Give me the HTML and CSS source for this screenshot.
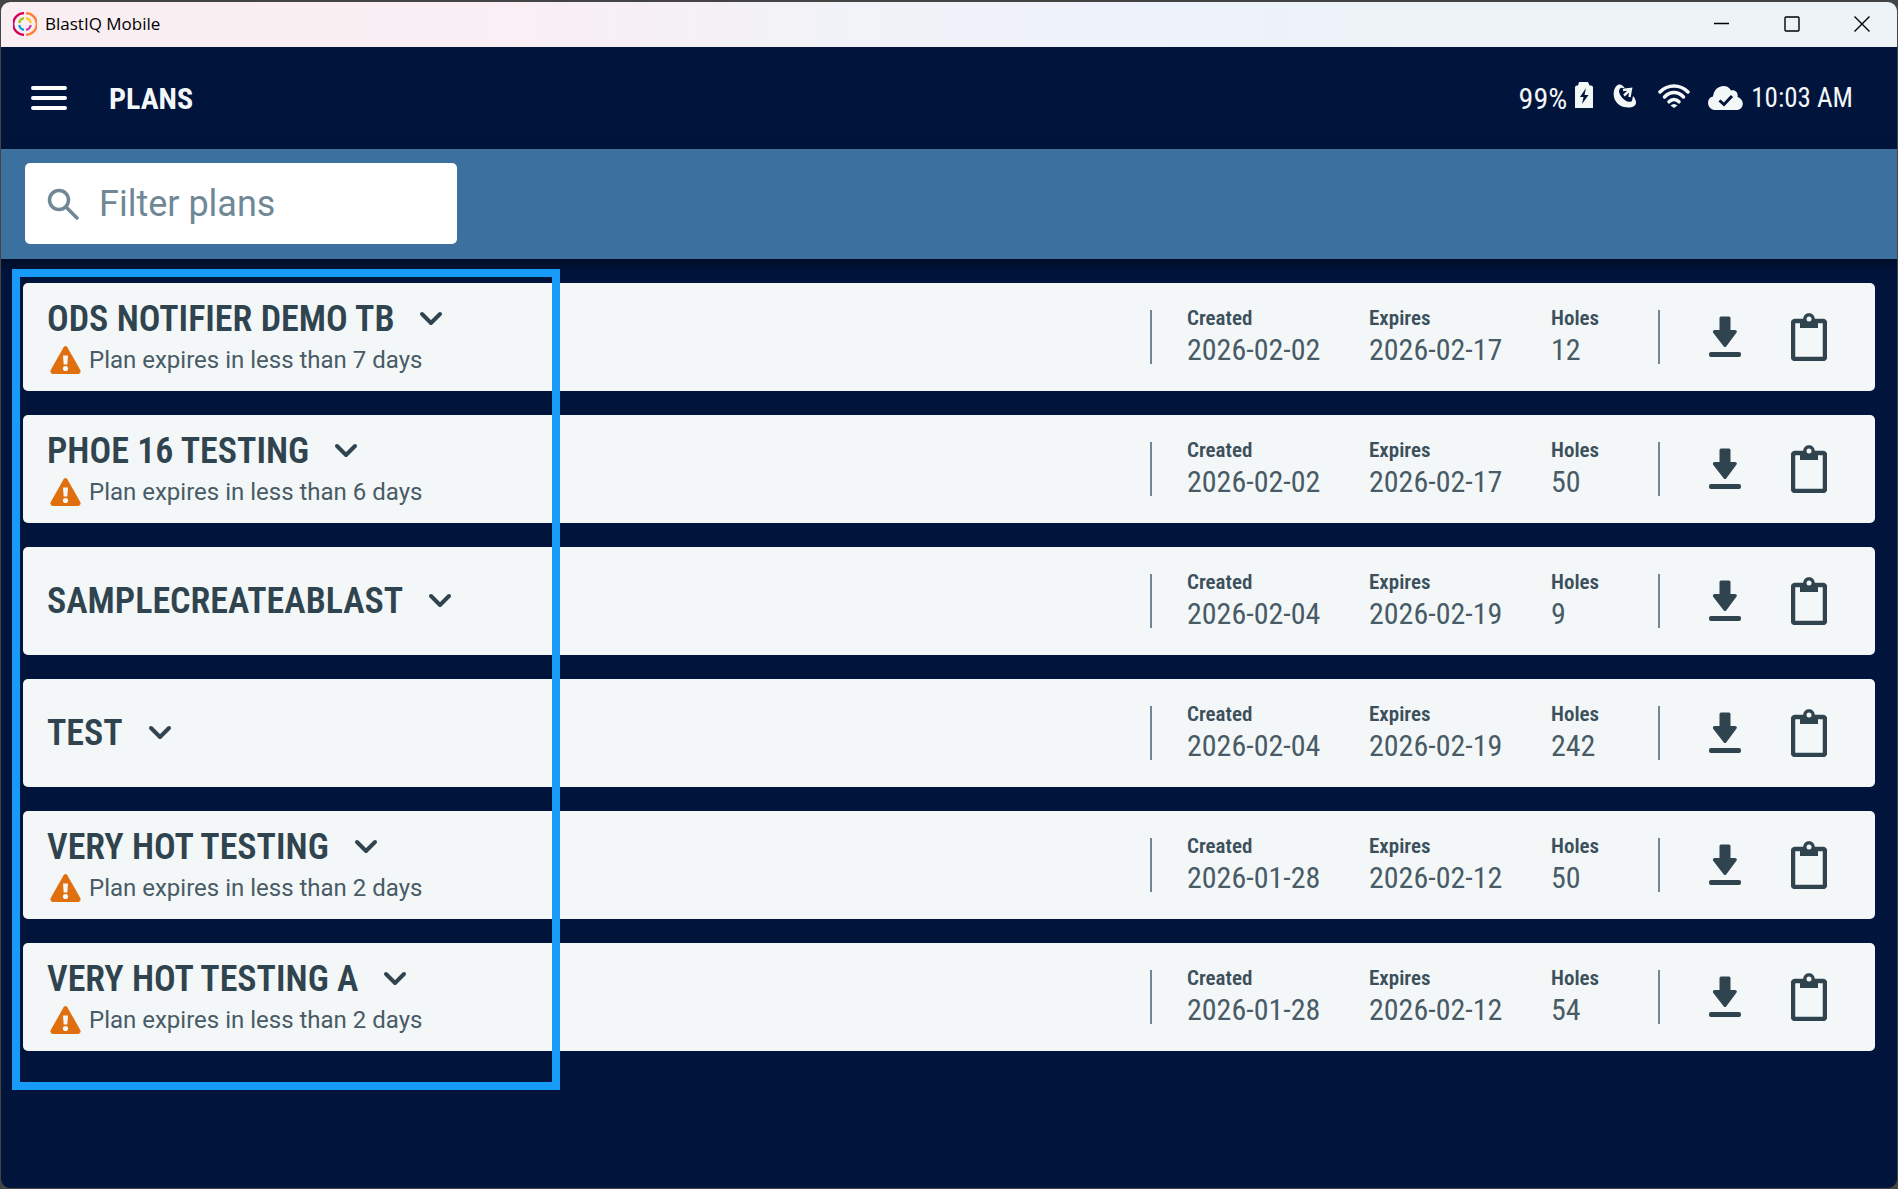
FILE: index.html
```html
<!DOCTYPE html>
<html lang="en">
<head>
    <meta charset="utf-8">
    <title>BlastIQ Mobile</title>
    <meta name="viewport" content="width=device-width, initial-scale=1">
    <link rel="stylesheet" href="styles.css">
</head>
<body>

<!-- Icon definitions -->
<svg class="icon-defs" aria-hidden="true">
    <symbol id="icon-chevron" viewBox="0 0 24 16">
        <path d="M3 3l9 9 9-9" fill="none" stroke="currentColor" stroke-width="4" stroke-linecap="round" stroke-linejoin="round"/>
    </symbol>
    <symbol id="icon-warning" viewBox="0 0 31 28">
        <path d="M13.6 1.2Q15.5-1 17.4 1.2L30.4 24.3Q31.2 27.5 28.5 28H2.5Q-.2 27.5.6 24.3Z" fill="#e0700d"/>
        <path d="M13 9.5h5l-.7 9h-3.6z" fill="#f3f7f8"/>
        <circle cx="15.5" cy="22.5" r="2.6" fill="#f3f7f8"/>
    </symbol>
    <symbol id="icon-download" viewBox="0 0 32 42">
        <path d="M10.5 2q0-1.5 1.5-1.5h8q1.5 0 1.5 1.5v12h4.5q3 .5 1.2 3L17.2 30.5q-1.2 1.2-2.4 0L4.3 17q-1.3-2.5 1.2-3h5z" fill="currentColor"/>
        <rect x="0" y="36" width="32" height="5" rx="2" fill="currentColor"/>
    </symbol>
    <symbol id="icon-clipboard" viewBox="0 0 36 48">
        <rect x="2" y="8" width="32" height="38" rx="2" fill="none" stroke="currentColor" stroke-width="4.5"/>
        <path d="M9 6h3.2C12.5-1.8 23.5-1.8 23.8 6H27v9H9z" fill="currentColor"/>
        <circle cx="18" cy="6" r="2.5" fill="#f3f7f8"/>
    </symbol>
</svg>

<div class="window">
    <!-- Title bar -->
    <div class="titlebar">
        <svg class="app-logo" viewBox="0 0 24 24" aria-hidden="true">
            <g fill="none" stroke-width="2.2">
                <path d="M11 1.2a10.8 10.8 0 0 0 0 21.6" stroke="#d6005b"/>
                <path d="M13 1.2a10.8 10.8 0 0 1 0 21.6" stroke="#ff7f32"/>
                <path d="M6.2 11A6 6 0 0 1 11 6.2" stroke="#a9c015"/>
                <path d="M13 6.2A6 6 0 0 1 17.8 11" stroke="#ffc61e"/>
                <path d="M6.2 13A6 6 0 0 0 11 17.8" stroke="#009fda"/>
                <path d="M13 17.8A6 6 0 0 0 17.8 13" stroke="#c238a8"/>
            </g>
        </svg>
        <span class="app-name">BlastIQ Mobile</span>
        <div class="window-controls">
            <button type="button" aria-label="Minimize">
                <svg viewBox="0 0 16 16"><path d="M0 7.5h15"/></svg>
            </button>
            <button type="button" aria-label="Maximize">
                <svg viewBox="0 0 16 16"><rect x="1" y="1" width="14" height="14" rx="1"/></svg>
            </button>
            <button type="button" aria-label="Close">
                <svg viewBox="0 0 16 16"><path d="M.5.5l15 15M15.5.5l-15 15"/></svg>
            </button>
        </div>
    </div>

    <!-- App header -->
    <header class="header">
        <button type="button" class="menu-button" aria-label="Menu">
            <svg viewBox="0 0 36 26"><path d="M2 3h32M2 13h32M2 23h32"/></svg>
        </button>
        <h1>PLANS</h1>
        <div class="status">
            <span>99%</span>
            <svg class="battery" viewBox="0 0 18 26" aria-hidden="true">
                <path d="M4 0h9l1.5 3.5H16q2 0 2 2V26H0V5.5q0-2 2-2h1z" fill="#f3f7f8"/>
                <path d="M11 6L5 15h3.5L7 22l6.5-9H9.5z" fill="#00143c"/>
            </svg>
            <svg class="satellite" viewBox="0 0 24 24" aria-hidden="true">
                <path d="M5 .8C-2 5-1 20 11 23c5 1.2 12 .5 12-4.5 0-2.5-1.5-5-3-6.5l-1 5c-2 1.5-5 1-8-1.5C7 12 4.5 7 7 4.5c1-1 3-.8 5 0C10.5 1.5 7.5-.5 5 .8z" fill="#f3f7f8"/>
                <path d="M10 6l8-1-1.5 8M17.5 5.5L11 11.5" fill="none" stroke="#f3f7f8" stroke-width="2.4"/>
            </svg>
            <svg class="wifi" viewBox="0 0 32 24" aria-hidden="true">
                <g fill="none" stroke="#f3f7f8" stroke-width="3.5" stroke-linecap="round">
                    <path d="M2 8C10 0 22 0 30 8"/>
                    <path d="M6.5 13c5.5-6 13.500-6 19 0"/>
                    <path d="M11 17.8c3-3.2 7-3.2 10 0"/>
                </g>
                <path d="M12.5 21.5q3.5-3 7 0L16 24z" fill="#f3f7f8"/>
            </svg>
            <svg class="cloud" viewBox="0 0 35 24" aria-hidden="true">
                <path d="M8 24C-1.5 24-2.5 12 5 10.5 6.5-1 19-3 23 4.5c4-1.5 7.5 2 6.5 6.5C37 13 36.5 24 28 24z" fill="#f3f7f8"/>
                <path d="M11.5 14.5l4.5 4 8-8.5" fill="none" stroke="#00143c" stroke-width="3"/>
            </svg>
            <span class="clock">10:03 AM</span>
        </div>
    </header>

    <!-- Filter -->
    <div class="filter-bar">
        <label class="filter">
            <svg viewBox="0 0 32 32" aria-hidden="true"><circle cx="12" cy="12" r="9.5"/><path d="M19 19l11 11"/></svg>
            <input type="text" placeholder="Filter plans" aria-label="Filter plans">
        </label>
    </div>

    <!-- Plan list -->
    <main class="plans">
        <article class="plan">
            <div class="plan-info">
                <button type="button" class="plan-name">ODS NOTIFIER DEMO TB <svg><use href="#icon-chevron"/></svg></button>
                <p class="plan-warning"><svg><use href="#icon-warning"/></svg>Plan expires in less than 7 days</p>
            </div>
            <dl class="plan-data">
                <div><dt>Created</dt><dd>2026-02-02</dd></div>
                <div><dt>Expires</dt><dd>2026-02-17</dd></div>
                <div><dt>Holes</dt><dd>12</dd></div>
            </dl>
            <div class="plan-actions">
                <button type="button" aria-label="Download"><svg class="download"><use href="#icon-download"/></svg></button>
                <button type="button" aria-label="Details"><svg class="clipboard"><use href="#icon-clipboard"/></svg></button>
            </div>
        </article>

        <article class="plan">
            <div class="plan-info">
                <button type="button" class="plan-name">PHOE 16 TESTING <svg><use href="#icon-chevron"/></svg></button>
                <p class="plan-warning"><svg><use href="#icon-warning"/></svg>Plan expires in less than 6 days</p>
            </div>
            <dl class="plan-data">
                <div><dt>Created</dt><dd>2026-02-02</dd></div>
                <div><dt>Expires</dt><dd>2026-02-17</dd></div>
                <div><dt>Holes</dt><dd>50</dd></div>
            </dl>
            <div class="plan-actions">
                <button type="button" aria-label="Download"><svg class="download"><use href="#icon-download"/></svg></button>
                <button type="button" aria-label="Details"><svg class="clipboard"><use href="#icon-clipboard"/></svg></button>
            </div>
        </article>

        <article class="plan">
            <div class="plan-info">
                <button type="button" class="plan-name">SAMPLECREATEABLAST <svg><use href="#icon-chevron"/></svg></button>
            </div>
            <dl class="plan-data">
                <div><dt>Created</dt><dd>2026-02-04</dd></div>
                <div><dt>Expires</dt><dd>2026-02-19</dd></div>
                <div><dt>Holes</dt><dd>9</dd></div>
            </dl>
            <div class="plan-actions">
                <button type="button" aria-label="Download"><svg class="download"><use href="#icon-download"/></svg></button>
                <button type="button" aria-label="Details"><svg class="clipboard"><use href="#icon-clipboard"/></svg></button>
            </div>
        </article>

        <article class="plan">
            <div class="plan-info">
                <button type="button" class="plan-name">TEST <svg><use href="#icon-chevron"/></svg></button>
            </div>
            <dl class="plan-data">
                <div><dt>Created</dt><dd>2026-02-04</dd></div>
                <div><dt>Expires</dt><dd>2026-02-19</dd></div>
                <div><dt>Holes</dt><dd>242</dd></div>
            </dl>
            <div class="plan-actions">
                <button type="button" aria-label="Download"><svg class="download"><use href="#icon-download"/></svg></button>
                <button type="button" aria-label="Details"><svg class="clipboard"><use href="#icon-clipboard"/></svg></button>
            </div>
        </article>

        <article class="plan">
            <div class="plan-info">
                <button type="button" class="plan-name">VERY HOT TESTING <svg><use href="#icon-chevron"/></svg></button>
                <p class="plan-warning"><svg><use href="#icon-warning"/></svg>Plan expires in less than 2 days</p>
            </div>
            <dl class="plan-data">
                <div><dt>Created</dt><dd>2026-01-28</dd></div>
                <div><dt>Expires</dt><dd>2026-02-12</dd></div>
                <div><dt>Holes</dt><dd>50</dd></div>
            </dl>
            <div class="plan-actions">
                <button type="button" aria-label="Download"><svg class="download"><use href="#icon-download"/></svg></button>
                <button type="button" aria-label="Details"><svg class="clipboard"><use href="#icon-clipboard"/></svg></button>
            </div>
        </article>

        <article class="plan">
            <div class="plan-info">
                <button type="button" class="plan-name">VERY HOT TESTING A <svg><use href="#icon-chevron"/></svg></button>
                <p class="plan-warning"><svg><use href="#icon-warning"/></svg>Plan expires in less than 2 days</p>
            </div>
            <dl class="plan-data">
                <div><dt>Created</dt><dd>2026-01-28</dd></div>
                <div><dt>Expires</dt><dd>2026-02-12</dd></div>
                <div><dt>Holes</dt><dd>54</dd></div>
            </dl>
            <div class="plan-actions">
                <button type="button" aria-label="Download"><svg class="download"><use href="#icon-download"/></svg></button>
                <button type="button" aria-label="Details"><svg class="clipboard"><use href="#icon-clipboard"/></svg></button>
            </div>
        </article>

        <!-- Highlight frame over the plan names -->
        <div class="highlight"></div>
    </main>
</div>

</body>
</html>
```

FILE: styles.css
```css
/* Base styles */
* {
    box-sizing: border-box;
}

body {
    margin: 0;
    min-height: 100vh;
    display: flex;
    padding: 2px 1px 1px;
    background: #444;
    font-family: "Roboto Condensed", Roboto, sans-serif;
    color: #30444f;
}

button {
    padding: 0;
    border: none;
    background: none;
    color: inherit;
    font: inherit;
    cursor: pointer;
}

svg {
    display: block;
    flex: none;
}

.icon-defs {
    position: absolute;
    width: 0;
    height: 0;
}

/* Window frame */
.window {
    flex: 1;
    display: flex;
    flex-direction: column;
    border-radius: 9px;
    overflow: hidden;
    background: #00143c;
}

.titlebar {
    display: flex;
    align-items: center;
    gap: 8px;
    height: 45px;
    padding: 0 0 2px 12px;
    background: linear-gradient(90deg, #f9eff3 0%, #f9eff4 28%, #f1f3f8 45%, #eef2fb 60%, #edf3f7 75%, #eef3f8 100%);
}

.app-logo {
    width: 24px;
    height: 24px;
}

.app-name {
    font: 17px "Open Sans", "Noto Sans", sans-serif;
    color: #000;
}

.window-controls {
    display: flex;
    margin-left: auto;
}

.window-controls button {
    width: 70px;
    height: 43px;
    display: grid;
    place-items: center;
}

.window-controls svg {
    width: 16px;
    height: 16px;
    fill: none;
    stroke: #000;
    stroke-width: 1.4;
}

/* App header */
.header {
    display: flex;
    align-items: center;
    height: 102px;
    padding: 0 44px 0 29px;
    color: #f3f7f8;
}

.menu-button svg {
    width: 38px;
    height: 26px;
    fill: none;
    stroke: #fff;
    stroke-width: 4;
    stroke-linecap: round;
}

.header h1 {
    margin: 0 0 0 41px;
    font-size: 30px;
    font-weight: 700;
}

.status {
    display: flex;
    align-items: center;
    margin-left: auto;
    font-size: 30px;
    font-weight: 400;
}

.status .clock {
    font-size: 27px;
}

.status .battery {
    width: 18px;
    height: 26px;
    margin: 0 20px 6px 8px;
}

.status .satellite {
    width: 24px;
    height: 24px;
    margin: 0 21px 4px 0;
}

.status .wifi {
    width: 32px;
    height: 24px;
    margin: 0 18px 4px 0;
}

.status .cloud {
    width: 35px;
    height: 24px;
    margin-right: 8px;
}

/* Filter */
.filter-bar {
    height: 110px;
    padding: 14px 24px;
    background: #3c709f;
    box-shadow: 0 6px 12px rgba(0, 0, 0, 0.4);
}

.filter {
    display: flex;
    align-items: center;
    gap: 20px;
    width: 432px;
    height: 81px;
    padding: 0 22px;
    border-radius: 5px;
    background: #fff;
}

.filter svg {
    width: 32px;
    height: 32px;
    fill: none;
    stroke: #708896;
    stroke-width: 3.5;
    stroke-linecap: round;
}

.filter input {
    flex: 1;
    min-width: 0;
    padding: 0;
    border: none;
    outline: none;
    background: none;
    font: 36px Roboto, sans-serif;
    color: #30444f;
}

.filter input::placeholder {
    color: #708896;
    opacity: 1;
}

/* Plan list */
.plans {
    position: relative;
    display: flex;
    flex-direction: column;
    gap: 24px;
    padding: 24px 22px 39px;
}

.plan {
    display: flex;
    align-items: center;
    height: 108px;
    padding-left: 24px;
    border-radius: 5px;
    background: #f3f7f8;
}

.plan-info {
    flex: 1;
}

.plan-name {
    display: flex;
    align-items: center;
    gap: 25px;
    font-size: 36px;
    line-height: 42px;
    font-weight: 600;
}

.plan-name svg {
    width: 24px;
    height: 16px;
}

.plan-warning {
    display: flex;
    align-items: center;
    gap: 8px;
    margin: 4px 0 0 3px;
    font: 24px/32px Roboto, sans-serif;
    color: #485b66;
}

.plan-warning svg {
    width: 31px;
    height: 28px;
}

.plan-data {
    display: flex;
    height: 54px;
    margin: 0;
    padding-left: 35px;
    border-left: 2px solid #708896;
    align-items: center;
}

.plan-data div {
    width: 182px;
}

.plan-data div:last-child {
    width: 107px;
}

.plan-data dt {
    font-size: 21px;
    line-height: 26px;
    font-weight: 600;
    color: #3c505b;
}

.plan-data dd {
    margin: 0;
    font-size: 30px;
    line-height: 38px;
    color: #485b66;
}

.plan-actions {
    display: flex;
    align-items: center;
    gap: 50px;
    height: 54px;
    padding: 0 48px 0 49px;
    border-left: 2px solid #708896;
}

.plan-actions .download {
    width: 32px;
    height: 42px;
}

.plan-actions .clipboard {
    width: 36px;
    height: 48px;
}

/* Highlight frame */
.highlight {
    position: absolute;
    top: 10px;
    bottom: 0;
    left: 11px;
    width: 548px;
    border: 8px solid #179bf7;
    pointer-events: none;
}
```
